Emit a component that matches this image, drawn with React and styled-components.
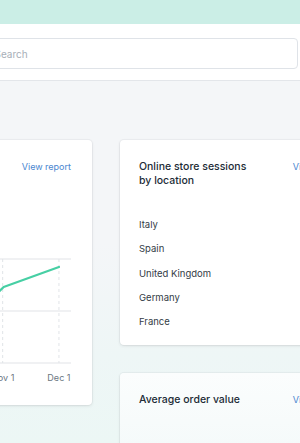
import React from "react";
import styled, { createGlobalStyle } from "styled-components";

const Global = createGlobalStyle`
  html, body { margin: 0; padding: 0; }
  body {
    width: 300px;
    height: 443px;
    overflow: hidden;
    background: #f4f6f8;
    font-family: Inter, "Noto Sans", sans-serif;
    -webkit-font-smoothing: antialiased;
  }
`;

const Page = styled.div`
  width: 300px;
  height: 443px;
  overflow: hidden;
  background: linear-gradient(to bottom, #f4f6f8 0%, #f4f6f8 55%, #eef6f6 80%, #ecf7f5 100%);
`;

const TopBar = styled.div`
  height: 24px;
  background: #cbeee6;
`;

const Header = styled.div`
  height: 57px;
  background: #ffffff;
  border-bottom: 1px solid #e3e6ea;
  padding-top: 14px;
  box-sizing: border-box;
`;

const SearchBox = styled.div`
  margin-left: -40px;
  width: 338px;
  height: 31px;
  box-sizing: border-box;
  border: 1px solid #dfe3e8;
  border-radius: 4px;
  display: flex;
  align-items: center;
  padding-left: 33.5px;
  font-size: 10px;
  color: #a7afb8;
`;

const Main = styled.div`
  display: flex;
  align-items: flex-start;
  gap: 28px;
  margin-left: -152px;
  padding-top: 59px;
`;

const Column = styled.div`
  display: flex;
  flex-direction: column;
  gap: 28px;
  flex: 0 0 244px;
`;

const Card = styled.div`
  background: ${(p) => (p.$faded ? "linear-gradient(to bottom, #fbfdfd, #f1f8f8)" : "#ffffff")};
  border-radius: 4px;
  box-shadow: 0 0 0 1px rgba(63, 63, 68, 0.04), 0 1px 3px rgba(63, 63, 68, 0.12);
  padding: ${(p) => p.$pad || "20px 22px 20px 19px"};
  box-sizing: border-box;
  height: ${(p) => p.$h || "auto"};
`;

const CardHead = styled.div`
  display: flex;
  justify-content: space-between;
  align-items: flex-start;
`;

const Title = styled.div`
  font-size: 10.5px;
  line-height: 14px;
  font-weight: 500;
  color: #212b36;
  max-width: 112px;
`;

const Link = styled.a`
  font-size: 9px;
  line-height: 14px;
  color: #4a87d0;
  text-decoration: none;
  white-space: nowrap;
`;

const List = styled.ul`
  list-style: none;
  margin: 25px 0 0;
  padding: 0;
  display: flex;
  flex-direction: column;
`;

const Item = styled.li`
  font-size: 9.5px;
  line-height: 24.3px;
  color: #333c46;
`;

const Chart = styled.svg`
  display: block;
  margin-top: 77px;
  width: 100%;
  height: 135px;
  overflow: visible;
`;

function SalesChart() {
  // chart coordinates: x = pageX + 131, y = pageY - 250
  const ox = 131;
  const gx = (x) => x + ox;
  const grid = [8, 60, 112];
  const dashed = [3, 59];
  const pts = [
    [-130, 70],
    [-80, 62],
    [-40, 58],
    [-10, 52],
    [0, 40],
    [4, 36],
    [59, 16],
  ];
  return (
    <Chart viewBox="0 0 202 135" preserveAspectRatio="none">
      {grid.map((y) => (
        <line key={y} x1="0" x2="202" y1={y} y2={y} stroke="#e1e4e8" strokeWidth="1" />
      ))}
      {dashed.map((x) => (
        <line
          key={x}
          x1={gx(x)}
          x2={gx(x)}
          y1="8"
          y2="112"
          stroke="#e1e4e8"
          strokeWidth="1"
          strokeDasharray="3 3"
        />
      ))}
      <polyline
        points={pts.map(([x, y]) => `${gx(x)},${y}`).join(" ")}
        fill="none"
        stroke="#47cfa4"
        strokeWidth="2.2"
        strokeLinejoin="round"
        strokeLinecap="round"
      />
      <text x={gx(3)} y="130.5" textAnchor="middle" fontSize="9" fill="#6b7682" fontFamily="Inter, sans-serif">
        Nov 1
      </text>
      <text x={gx(59)} y="130.5" textAnchor="middle" fontSize="9" fill="#6b7682" fontFamily="Inter, sans-serif">
        Dec 1
      </text>
    </Chart>
  );
}

export default function App() {
  return (
    <>
      <Global />
      <Page>
        <TopBar />
        <Header>
          <SearchBox>Search</SearchBox>
        </Header>
        <Main>
          <Column>
            <Card $h="265px" $pad="20px 21px 20px 20px">
              <CardHead>
                <Title>Total sales</Title>
                <Link>View report</Link>
              </CardHead>
              <SalesChart />
            </Card>
          </Column>
          <Column>
            <Card $h="205px">
              <CardHead>
                <Title>Online store sessions by location</Title>
                <Link>View report</Link>
              </CardHead>
              <List>
                <Item>Italy</Item>
                <Item>Spain</Item>
                <Item>United Kingdom</Item>
                <Item>Germany</Item>
                <Item>France</Item>
              </List>
            </Card>
            <Card $h="120px" $faded>
              <CardHead>
                <Title>Average order value</Title>
                <Link>View report</Link>
              </CardHead>
            </Card>
          </Column>
        </Main>
      </Page>
    </>
  );
}
